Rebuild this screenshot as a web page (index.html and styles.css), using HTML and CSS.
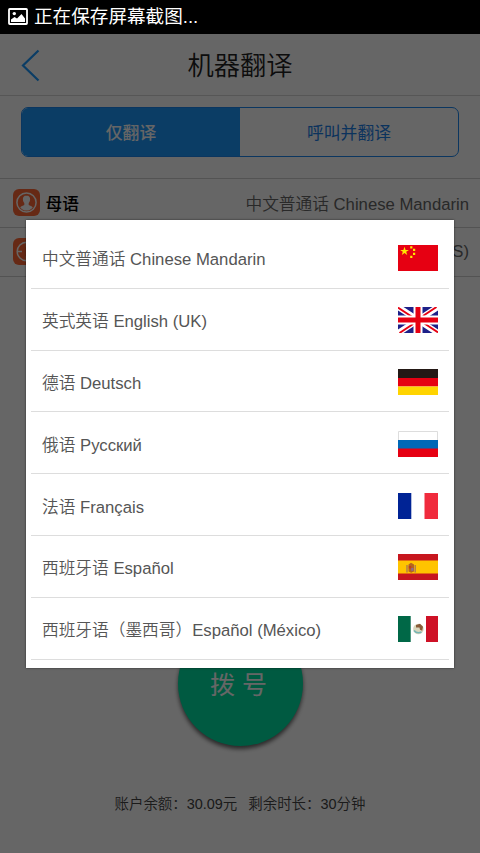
FILE: index.html
```html
<!DOCTYPE html>
<html lang="zh-CN">
<head>
<meta charset="utf-8">
<title>机器翻译</title>
<link rel="stylesheet" href="styles.css">
</head>
<body>
<div class="screen">
  <header class="status">
    <svg class="status-icon" width="20" height="17" viewBox="0 0 20 17"><rect x="1" y="1" width="18" height="15" rx="0.8" fill="none" stroke="#fff" stroke-width="1.8"/><circle cx="6.300" cy="5.600" r="1.700" fill="#fff"/><path d="M3 14V11.500L6.500 9L9 10.500L13.500 6L17 10.500V14Z" fill="#fff"/></svg>
    <span>正在保存屏幕截图...</span>
  </header>
  <main class="page">
    <div class="titlebar">
      <svg class="back" width="20" height="34" viewBox="0 0 20 34"><path d="M17.500 2.500L2 17.500L17.500 32.500" fill="none" stroke="#1c98fc" stroke-width="2.200"/></svg>
      <h1>机器翻译</h1>
    </div>
    <div class="tabs">
      <div class="tab active">仅翻译</div>
      <div class="tab">呼叫并翻译</div>
    </div>
    <div class="row">
      <svg class="row-icon" width="27" height="27" viewBox="0 0 27 27"><rect width="27" height="27" rx="6" fill="#ff6836"/><circle cx="13.500" cy="13.500" r="9.600" fill="none" stroke="#fff" stroke-width="1.500"/><path d="M13.500 6.500c-2.600 0-3.800 1.800-3.600 4.100.1 1.600.6 2.600 1.400 3.400v2.100c-1.300.8-3.200 1.200-4.100 2.300 1.600 2 3.600 3.100 6.300 3.100s4.700-1.100 6.300-3.100c-.9-1.100-2.800-1.500-4.100-2.300V14c.8-.8 1.300-1.800 1.400-3.400.2-2.300-1-4.100-3.600-4.100z" fill="#fff"/></svg>
      <span class="row-label">母语</span>
      <span class="row-value">中文普通话 Chinese Mandarin</span>
    </div>
    <div class="row">
      <svg class="row-icon" width="27" height="27" viewBox="0 0 27 27"><rect width="27" height="27" rx="6" fill="#ff6836"/><circle cx="13.500" cy="13.500" r="9.300" fill="none" stroke="#fff" stroke-width="1.500"/><path d="M4 13.500h5M18 13.500h5M13.500 4v5M13.500 18v5" stroke="#fff" stroke-width="1.300"/></svg>
      <span class="row-value">(US)</span>
    </div>
    <div class="dial">拨 号</div>
    <p class="account"><span>账户余额：30.09元</span><span>剩余时长：30分钟</span></p>
  </main>
  <div class="overlay">
    <ul class="dialog">
      <li>中文普通话 Chinese Mandarin
        <svg class="flag" viewBox="0 0 40 26"><path fill="#e60012" d="M0 0h40v26H0z"/><path fill="#ffe600" d="M6.500 1.800l1.100 3.100h3.300L8.200 6.800l1 3.200-2.700-1.900L3.800 10l1-3.200-2.700-1.900h3.300z"/><path fill="#ffe600" d="M12.200 1.200h2.200v2.200h-2.200zM15 3.800h2.200v2.200H15zM15 7.800h2.200v2.200H15zM12.200 10.800h2.200v2.200h-2.200z"/></svg></li>
      <li>英式英语 English (UK)
        <svg class="flag" viewBox="0 0 40 26"><path fill="#1d2088" d="M0 0h40v26H0z"/><path d="M0 0L40 26M40 0L0 26" stroke="#fff" stroke-width="6"/><path d="M0 0.600L17 11.700M40 25.400L23 14.300M38.500 0L23 10.200M1.500 26L17 15.800" stroke="#e60012" stroke-width="1.900"/><path d="M20 0V26M0 13H40" stroke="#fff" stroke-width="9"/><path d="M20 0V26M0 13H40" stroke="#e60012" stroke-width="5"/></svg></li>
      <li>德语 Deutsch
        <svg class="flag" viewBox="0 0 40 26"><path fill="#231815" d="M0 0h40v9H0z"/><path fill="#e60012" d="M0 9h40v8.500H0z"/><path fill="#ffd400" d="M0 17.500h40V26H0z"/></svg></li>
      <li>俄语 Русский
        <svg class="flag" viewBox="0 0 40 26"><path fill="#fff" stroke="#ddd" d="M.5.5h39v25H.5z"/><path fill="#0068b7" d="M0 9h40v9H0z"/><path fill="#e60012" d="M0 17.500h40V26H0z"/></svg></li>
      <li>法语 Français
        <svg class="flag" viewBox="0 0 40 26"><path fill="#fff" d="M0 0h40v26H0z"/><path fill="#002395" d="M0 0h13.300v26H0z"/><path fill="#f02b3d" d="M26.500 0H40v26H26.500z"/></svg></li>
      <li>西班牙语 Español
        <svg class="flag" viewBox="0 0 40 26"><path fill="#c7161e" d="M0 0h40v26H0z"/><path fill="#ffc400" d="M0 6.600h40v13H0z"/><path fill="#b5651d" d="M10.500 10.500l2.500-1.800 3 1.800v7l-2.800 1.300-2.700-1.300z"/><path d="M9 11v7.500M17.200 11v7.500" stroke="#a87555" stroke-width="1.300"/><path fill="#c23a22" d="M10.800 12h2.400v2.500h-2.400z"/><path fill="#8c6a92" d="M13.200 14h2.300v2.800h-2.300z"/></svg></li>
      <li>西班牙语（墨西哥）Español (México)
        <svg class="flag" viewBox="0 0 40 26"><path fill="#fff" d="M0 0h40v26H0z"/><path fill="#006847" d="M0 0h12.700v26H0z"/><path fill="#ce1126" d="M28 0h12v26H28z"/><circle cx="20.400" cy="13" r="5.300" fill="#d9d6bd"/><path fill="#895b38" d="M18 9l4-1.300 3 3-.8 4-2.200-1-.5-2.300-3.500.2z"/><path d="M16 14.500q3 3.500 7.500 1.500" fill="none" stroke="#75b5b5" stroke-width="1.600"/></svg></li>
    </ul>
  </div>
</div>
</body>
</html>
```
FILE: styles.css
```css
* { box-sizing: border-box; }
body { margin: 0; font-family: "Liberation Sans", "Noto Sans CJK SC", sans-serif; }
.screen { position: relative; width: 480px; height: 853px; display: flex; flex-direction: column; overflow: hidden; background: #000; }
.status { height: 34px; flex: none; display: flex; align-items: center; gap: 6px; padding: 0 0 1px 8px; color: #fff; font-size: 18.600px; line-height: 32px; }
.page { flex: 1; background: #fff; display: flex; flex-direction: column; align-items: stretch; }
.titlebar { height: 62px; display: grid; grid-template-columns: 60px 1fr 60px; align-items: center; border-bottom: 1px solid #d8d8d8; }
.back { margin-left: 21px; }
.titlebar h1 { margin: 0; padding-top: 3px; text-align: center; font-size: 26.300px; font-weight: 350; color: #222; line-height: 58px; }
.tabs { display: flex; height: 50px; margin: 11px 21px 21px; border: 1px solid #1c88f0; border-radius: 7px; overflow: hidden; }
.tab { flex: 1; display: flex; align-items: center; justify-content: center; color: #1c80e8; font-size: 16.800px; }
.tab.active { background: #1c98fc; color: #fff; font-weight: 500; }
.row { height: 49px; border-top: 1px solid #d0d0d0; display: flex; align-items: center; padding: 0 11px 1px 12.500px; font-size: 16.700px; }
.row + .row { height: 50px; border-bottom: 1px solid #d0d0d0; }
.row-label { margin-left: 6px; color: #000; font-weight: 500; }
.row-value { margin-left: auto; color: #666; font-weight: 350; }
.dial { width: 125px; height: 125px; margin: 344px auto 0; padding: 2px 3px 0 0; border-radius: 50%; background: #00e1a3; box-shadow: 0 3px 4px rgba(0,0,0,.6); color: #fff; font-size: 25px; text-align: center; line-height: 125px; font-weight: 400; }
.account { display: flex; justify-content: center; gap: 11px; margin: 47px 0 0; font-size: 14.450px; line-height: 22px; color: #444; font-weight: 350; }
.overlay { position: absolute; inset: 34px 0 0; background: rgba(0,0,0,.6); padding: 186px 26.500px 0 26px; }
.dialog { margin: 0; padding: 7px 5px 8px; height: 447.500px; list-style: none; background: #fff; box-shadow: 0 0 2px rgba(0,0,0,.6); color: #555; font-size: 16.700px; font-weight: 350; }
.dialog li { height: 61.800px; border-bottom: 1.500px solid #ddd; padding: 2px 11px 0; display: flex; align-items: center; justify-content: space-between; }
.flag { width: 40px; height: 26px; display: block; }
```
